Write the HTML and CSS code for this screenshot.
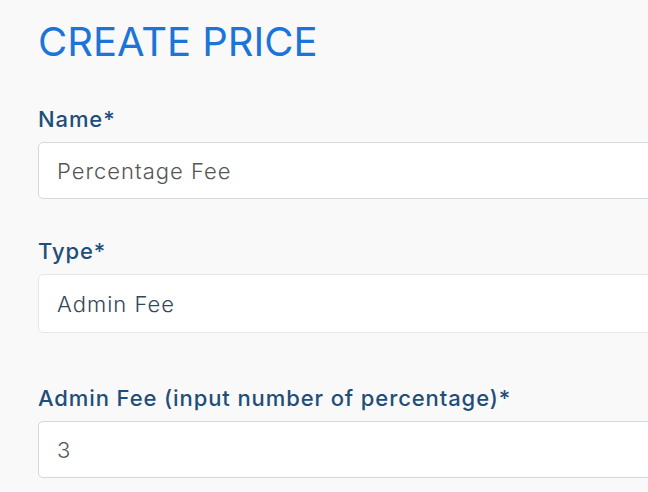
FILE: index.html
```html
<!DOCTYPE html>
<html lang="en">
<head>
    <meta charset="UTF-8">
    <meta name="viewport" content="width=device-width, initial-scale=1.0">
    <title>Create Price</title>
    <link rel="stylesheet" href="styles.css">
</head>
<body>
    <div class="page">
        <h1 class="page-title">CREATE PRICE</h1>

        <div class="field field-name">
            <label class="field-label">Name*</label>
            <div class="field-input">Percentage Fee</div>
        </div>

        <div class="field field-type">
            <label class="field-label">Type*</label>
            <div class="field-input field-select">Admin Fee</div>
        </div>

        <div class="field field-fee">
            <label class="field-label">Admin Fee (input number of percentage)*</label>
            <div class="field-input">3</div>
        </div>
    </div>
</body>
</html>
```

FILE: styles.css
```css
body {
    margin: 0;
    background-color: #f9f9f9;
    font-family: Inter, Lato, sans-serif;
    overflow: hidden;
}

.page {
    padding: 18px 0 0 38px;
    width: 760px;
}

.page-title {
    margin: 0 0 40px;
    font-size: 40px;
    font-weight: 400;
    line-height: 48px;
    color: #1b74d8;
}

.field {
    display: flex;
    flex-direction: column;
}

.field-label {
    font-size: 22px;
    font-weight: 500;
    line-height: 26px;
    letter-spacing: 0.9px;
    color: #1f4e79;
    margin-bottom: 10px;
}

.field-input {
    box-sizing: border-box;
    height: 57px;
    padding: 0 18px;
    display: flex;
    align-items: center;
    background: #fff;
    border: 1px solid #d3d8df;
    border-radius: 5px;
    font-size: 22px;
    font-weight: 300;
    letter-spacing: 1px;
    color: #555;
}

.field-name {
    margin-bottom: 39px;
}

.field-type {
    margin-bottom: 52px;
}

.field-select {
    height: 59px;
    border-color: #e6e6e6;
    color: #34475b;
}
```
